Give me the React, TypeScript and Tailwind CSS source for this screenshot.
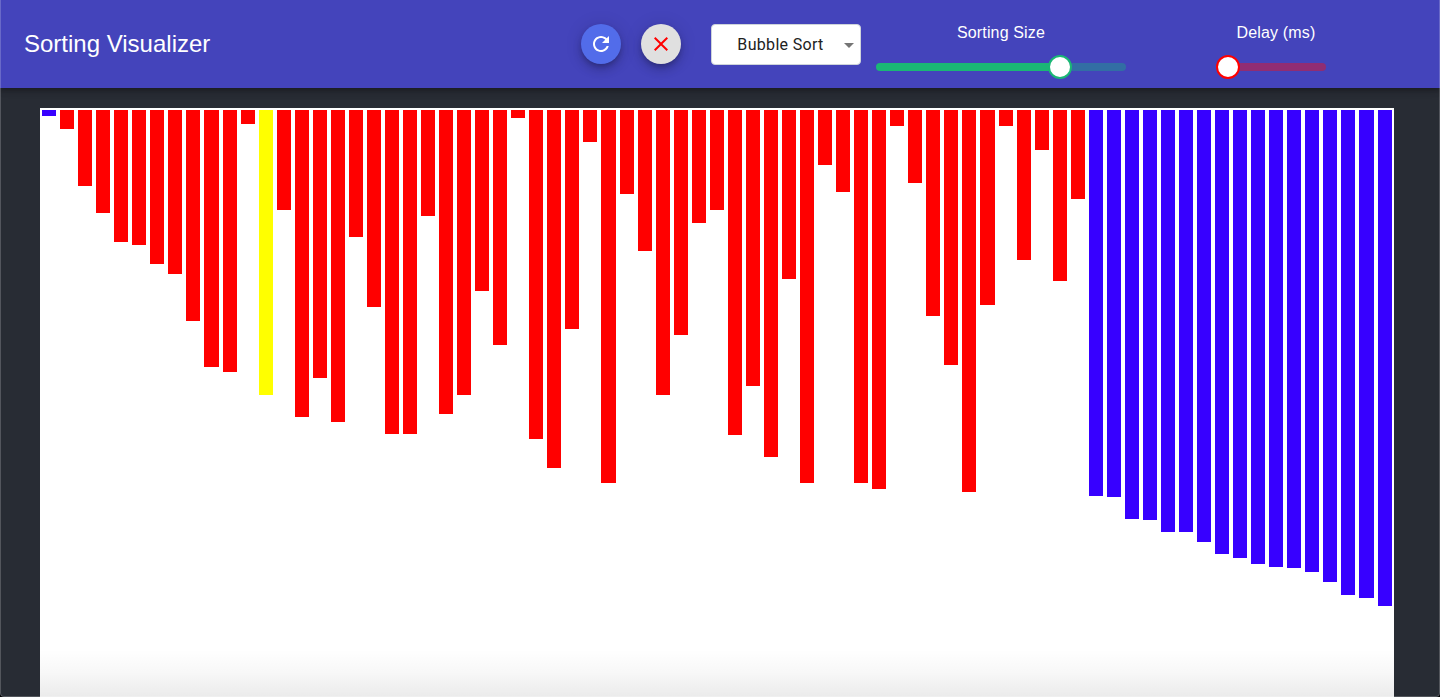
import React from "react";

type BarState = "sorted" | "pending" | "active";

const VALUES: number[] = [
  6, 19, 76, 103, 132, 135, 154, 164, 211, 257, 262, 14, 285, 100, 307, 268, 312, 127, 197,
  324, 324, 106, 304, 285, 181, 235, 8, 329, 358, 219, 32, 373, 84, 141, 285, 225, 113, 100, 325,
  276, 347, 169, 373, 55, 82, 373, 379, 16, 73, 206, 255, 382, 195, 16, 150, 40, 171, 89,
  386, 387, 409, 410, 422, 422, 432, 444, 448, 454, 457, 458, 462, 472, 485, 488, 496,
];

const ACTIVE_INDEX = 12;
const SORTED_FROM = 58;

const BAR_COLORS: Record<BarState, string> = {
  sorted: "bg-[#3700ff]",
  pending: "bg-[#ff0000]",
  active: "bg-[#ffff00]",
};

function barState(index: number): BarState {
  if (index === ACTIVE_INDEX) return "active";
  if (index === 0 || index >= SORTED_FROM) return "sorted";
  return "pending";
}

const FAB_SHADOW =
  "shadow-[0_3px_5px_-1px_rgba(0,0,0,0.2),0_6px_10px_0_rgba(0,0,0,0.14),0_1px_18px_0_rgba(0,0,0,0.12)]";

function Header() {
  return (
    <header className="relative z-10 flex h-[88px] shrink-0 items-start bg-[#4444bb] text-white shadow-[0_2px_4px_-1px_rgba(0,0,0,0.2),0_4px_5px_0_rgba(0,0,0,0.14),0_1px_10px_0_rgba(0,0,0,0.12)]">
      <h1 className="ml-6 w-[557px] pt-7 text-[24px] leading-8 whitespace-nowrap">Sorting Visualizer</h1>

      <div className="flex gap-5 pt-6">
        <button aria-label="Restart" className={`flex size-10 items-center justify-center rounded-full bg-[#526cea] ${FAB_SHADOW}`}>
          <svg viewBox="0 0 24 24" className="size-6" fill="currentColor">
            <path d="M17.65 6.35C16.2 4.9 14.21 4 12 4c-4.42 0-7.99 3.58-7.99 8s3.57 8 7.99 8c3.73 0 6.84-2.55 7.73-6h-2.08c-.82 2.33-3.04 4-5.65 4-3.31 0-6-2.69-6-6s2.69-6 6-6c1.66 0 3.14.69 4.22 1.78L13 11h7V4l-2.35 2.35z" />
          </svg>
        </button>
        <button aria-label="Stop" className={`flex size-10 items-center justify-center rounded-full bg-[#e0e0e0] text-[#ff0000] ${FAB_SHADOW}`}>
          <svg viewBox="0 0 24 24" className="size-6" fill="currentColor">
            <path d="M19 6.41L17.59 5 12 10.59 6.41 5 5 6.41 10.59 12 5 17.59 6.41 19 12 13.41 17.59 19 19 17.59 13.41 12z" />
          </svg>
        </button>
      </div>

      <button className="mt-6 ml-[30px] flex h-[41px] w-[150px] items-center rounded-[4px] border border-[#ced4da] bg-white font-[Roboto,sans-serif] text-[16px] text-[#212121]">
        <span className="flex-1 pl-3 text-center tracking-[0.32px]">Bubble Sort</span>
        <svg viewBox="0 0 24 24" className="-mr-px size-6 shrink-0 text-[#757575]" fill="currentColor">
          <path d="M7 10l5 5 5-5z" />
        </svg>
      </button>

      <div className="ml-[15px] flex w-[250px] flex-col items-center pt-[21px]">
        <span className="text-[16px] leading-6 tracking-[0.15px]">Sorting Size</span>
        <div className="mt-[10px] flex h-6 w-full items-center">
          <div className="h-2 w-[184px] rounded-l-full bg-[#1ab775]" />
          <div className="relative -mx-3 size-6 shrink-0 rounded-full border-2 border-[#1ab775] bg-white" />
          <div className="h-2 flex-1 rounded-r-full bg-[#326ea4]" />
        </div>
      </div>

      <div className="ml-[90px] flex w-[120px] flex-col items-center pt-[21px]">
        <span className="text-[16px] leading-6 tracking-[0.15px]">Delay (ms)</span>
        <div className="mt-[10px] flex h-6 w-[110px] items-center self-start">
          <div className="relative size-6 shrink-0 rounded-full border-2 border-[#ff0000] bg-white" />
          <div className="-ml-3 h-2 flex-1 rounded-r-full bg-[#902d73]" />
        </div>
      </div>
    </header>
  );
}

export default function App() {
  return (
    <div className="h-[697px] w-[1440px] bg-black">
      <div className="relative flex h-full flex-col overflow-hidden rounded-b-[4px] bg-[#282c34] font-['Liberation_Sans',Arial,sans-serif]">
        <Header />
        <main className="mt-5 ml-10 flex w-[1354px] flex-1 items-start bg-white pt-[2px] pl-[0.032px]">
          {VALUES.map((value, index) => (
            <div
              key={index}
              className={`mx-[2px] w-[14.047px] shrink-0 ${BAR_COLORS[barState(index)]}`}
              style={{ height: value }}
            />
          ))}
        </main>
        <div className="pointer-events-none absolute inset-x-10 bottom-0 h-12 bg-linear-to-t from-black/8 via-black/3 to-transparent" />
        <div className="pointer-events-none absolute inset-0 z-20 rounded-b-[4px] border-x border-b border-white/20" />
      </div>
    </div>
  );
}
